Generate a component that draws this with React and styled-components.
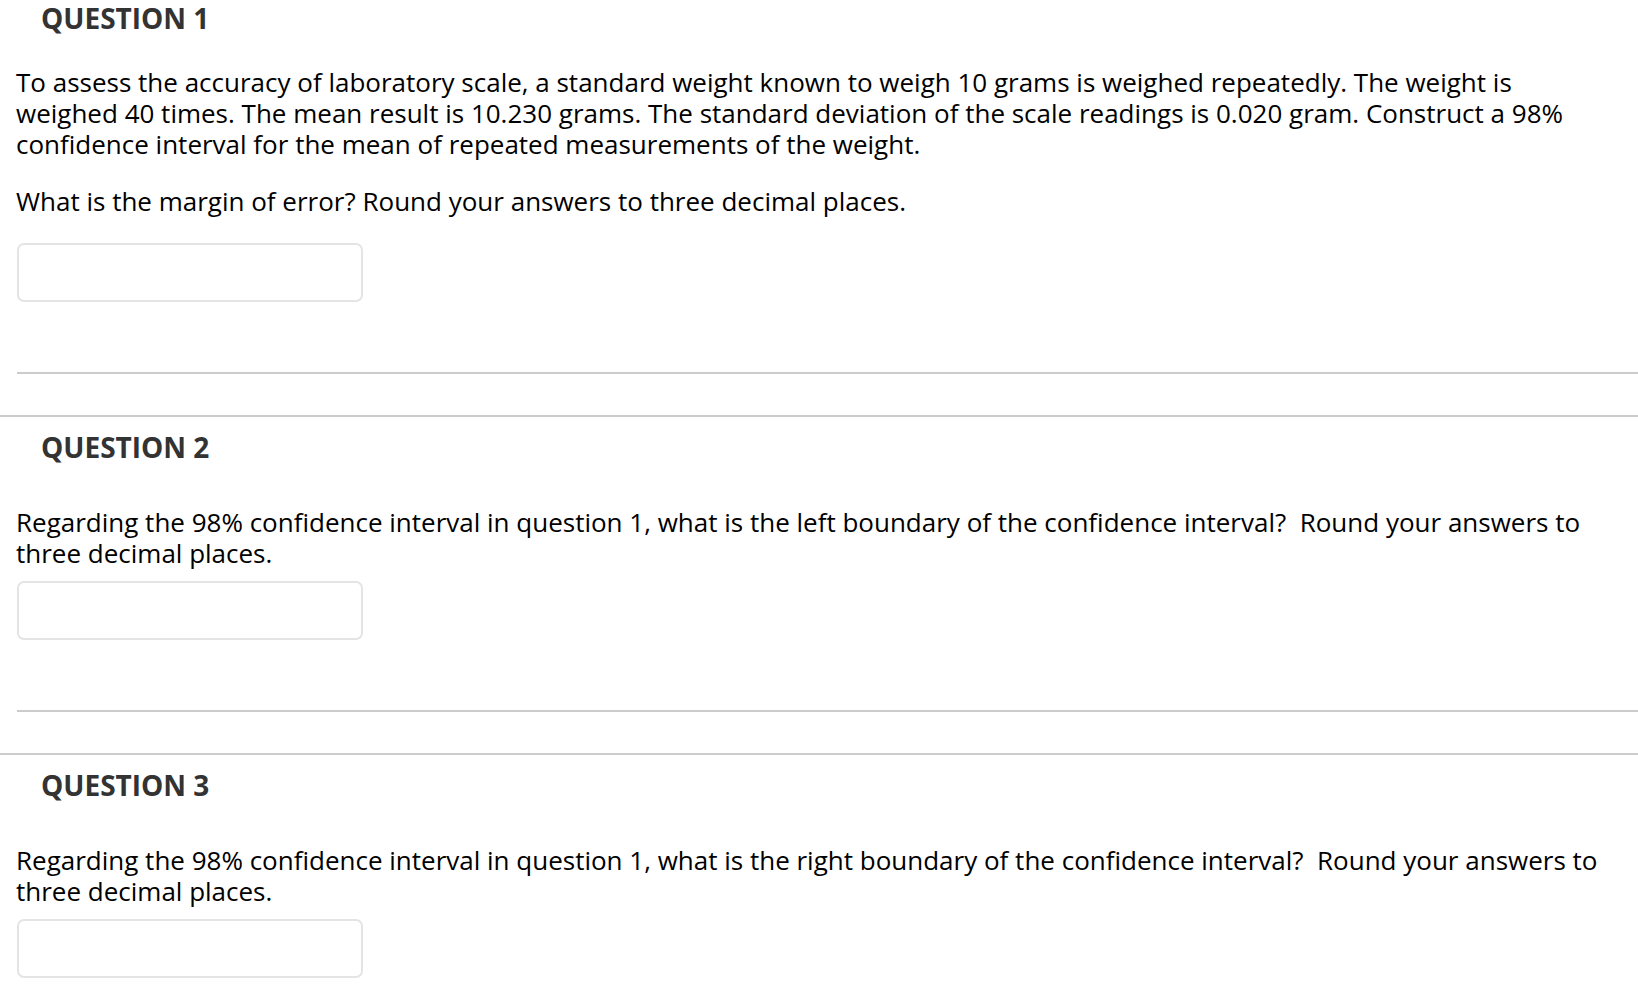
import React from "react";
import styled, { createGlobalStyle } from "styled-components";

const GlobalStyle = createGlobalStyle`
  html, body {
    margin: 0;
    padding: 0;
    background: #ffffff;
  }
  body {
    font-family: "Open Sans", "Liberation Sans", sans-serif;
    color: #000000;
  }
`;

const questions = [
  {
    number: 1,
    first: true,
    textTop: 31,
    inputTop: 26,
    paragraphs: [
      [
        "To assess the accuracy of laboratory scale, a standard weight known to weigh 10 grams is weighed repeatedly. The weight is",
        "weighed 40 times. The mean result is 10.230 grams. The standard deviation of the scale readings is 0.020 gram. Construct a 98%",
        "confidence interval for the mean of repeated measurements of the weight.",
      ],
      ["What is the margin of error? Round your answers to three decimal places."],
    ],
  },
  {
    number: 2,
    textTop: 42,
    inputTop: 12,
    paragraphs: [
      [
        "Regarding the 98% confidence interval in question 1, what is the left boundary of the confidence interval?\u00a0 Round your answers to",
        "three decimal places.",
      ],
    ],
  },
  {
    number: 3,
    textTop: 42,
    inputTop: 12,
    paragraphs: [
      [
        "Regarding the 98% confidence interval in question 1, what is the right boundary of the confidence interval?\u00a0 Round your answers to",
        "three decimal places.",
      ],
    ],
  },
];

function App() {
  return (
    <Page>
      <GlobalStyle />
      {questions.map((q) => (
        <Section key={q.number} $first={q.first}>
          <Heading>QUESTION {q.number}</Heading>
          <Prompt $top={q.textTop}>
            {q.paragraphs.map((lines, i) => (
              <Paragraph key={i}>
                {lines.map((line, j) => (
                  <React.Fragment key={j}>
                    {j > 0 && <br />}
                    {line}
                  </React.Fragment>
                ))}
              </Paragraph>
            ))}
          </Prompt>
          <AnswerInput type="text" $top={q.inputTop} aria-label={`Answer ${q.number}`} />
          <Divider />
        </Section>
      ))}
    </Page>
  );
}

export default App;

const Page = styled.div`
  width: 100%;
  min-height: 1002px;
  overflow: hidden;
`;

const Section = styled.section`
  padding-top: ${(p) => (p.$first ? "0" : "12px")};
  padding-bottom: 41px;
  border-top: ${(p) => (p.$first ? "none" : "2px solid #cccccc")};
`;

const Heading = styled.h2`
  margin: 0;
  padding-left: 41px;
  height: 36px;
  font-size: 28px;
  line-height: 36px;
  font-weight: 700;
  color: #333333;
`;

const Prompt = styled.div`
  margin-top: ${(p) => p.$top}px;
  padding: 0 16px;
  display: flex;
  flex-direction: column;
  gap: 26px;
`;

const Paragraph = styled.p`
  margin: 0;
  font-size: 26px;
  line-height: 31px;
  white-space: nowrap;
`;

const AnswerInput = styled.input`
  display: block;
  box-sizing: border-box;
  margin: ${(p) => p.$top}px 0 0 17px;
  width: 346px;
  height: 59px;
  border: 2px solid #e4e4e4;
  border-radius: 7px;
  background: #ffffff;
  outline: none;
  font-family: inherit;
  font-size: 22px;
  padding: 0 12px;
`;

const Divider = styled.hr`
  margin: 70px 0 0 17px;
  border: none;
  height: 2px;
  background: #cccccc;
`;
